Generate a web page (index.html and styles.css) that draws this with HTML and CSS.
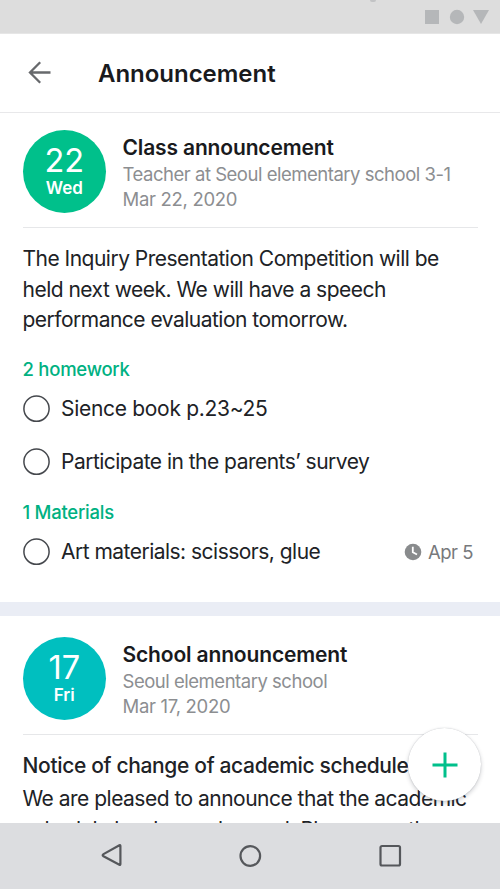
FILE: index.html
```
<!DOCTYPE html>
<html lang="en">
<head>
<meta charset="utf-8">
<title>Announcement</title>
<link rel="stylesheet" href="styles.css">
</head>
<body>
<div class="screen">
  <div class="status">
    <span class="speaker"></span>
    <svg width="66" height="16" viewBox="0 0 66 16"><path d="M1 1h14v14H1z"/><circle cx="33" cy="8" r="7.2"/><path d="M49 1h16l-8 14z"/></svg>
  </div>
  <header class="appbar">
    <svg class="back" width="24" height="24" viewBox="0 0 24 24"><path d="M22.500 11.500H2M12.200 1.300L2 11.500l10.200 10.200"/></svg>
    <h1 class="appbar-title">Announcement</h1>
  </header>
  <main class="feed">
    <article class="card">
      <div class="card-head">
        <div class="date date-green"><span class="day">22</span><span class="weekday">Wed</span></div>
        <div class="info">
          <h2 class="title">Class announcement</h2>
          <p class="sub">Teacher at Seoul elementary school 3-1</p>
          <p class="sub sub-date">Mar 22, 2020</p>
        </div>
      </div>
      <p class="body">The Inquiry Presentation Competition will be<br>held next week. We will have a speech<br>performance evaluation tomorrow.</p>
      <h3 class="group">2 homework</h3>
      <div class="task"><svg class="check" width="27" height="28" viewBox="0 0 27 28"><circle cx="13.500" cy="13.700" r="12.600"/></svg><span class="label label-wide">Sience book p.23~25</span></div>
      <div class="task task-next"><svg class="check" width="27" height="28" viewBox="0 0 27 28"><circle cx="13.500" cy="13.700" r="12.600"/></svg><span class="label">Participate in the parents’ survey</span></div>
      <h3 class="group group-materials">1 Materials</h3>
      <div class="task"><svg class="check" width="27" height="28" viewBox="0 0 27 28"><circle cx="13.500" cy="13.700" r="12.600"/></svg><span class="label">Art materials: scissors, glue</span>
        <span class="due"><svg width="18" height="18" viewBox="0 0 18 18"><circle cx="9" cy="9" r="8.300"/><path d="M8.800 3.800v5.400l4.200 2.300"/></svg>Apr 5</span>
      </div>
    </article>
    <article class="card card-school">
      <div class="card-head">
        <div class="date date-teal"><span class="day">17</span><span class="weekday">Fri</span></div>
        <div class="info">
          <h2 class="title">School announcement</h2>
          <p class="sub">Seoul elementary school</p>
          <p class="sub sub-date">Mar 17, 2020</p>
        </div>
      </div>
      <h3 class="notice">Notice of change of academic schedule</h3>
      <p class="body body-notice">We are pleased to announce that the academic<br>schedule has been changed. Please see the</p>
    </article>
  </main>
  <nav class="nav">
    <svg width="24" height="24" viewBox="0 0 24 24"><path d="M22.400 2v18q0 1.200-1 .7L5.500 12.300q-1.700-1.100 0-2.200L21.400 1.300q1-.5 1 .7z"/></svg>
    <svg width="24" height="24" viewBox="0 0 24 24"><circle cx="12.300" cy="12" r="9.800"/></svg>
    <svg width="24" height="24" viewBox="0 0 24 24"><rect x="2.500" y="2" width="19.500" height="19.500" rx="1.500"/></svg>
  </nav>
  <div class="fab"><svg width="26" height="26" viewBox="0 0 26 26"><path d="M13 .5v25M.5 13h25"/></svg></div>
</div>
</body>
</html>
```
FILE: styles.css
```
* { box-sizing: border-box; }
body, h1, h2, h3, p { margin: 0; }
body { font-family: Inter, "Liberation Sans", sans-serif; color: #202226; background: #fff; }
svg { display: block; flex: none; }

.screen { position: relative; display: flex; flex-direction: column; width: 500px; height: 889px; overflow: hidden; }
.status { flex: none; display: flex; justify-content: flex-end; align-items: center; height: 34px; padding-right: 10px; background: #ddd; border-bottom: 1px solid #e6e6e6; }
.status svg { fill: #b5b7b9; }
.speaker { align-self: flex-start; width: 6px; height: 2px; margin-right: 48px; border-radius: 0 0 3px 3px; background: #c2c3c5; }
.appbar { flex: none; display: flex; align-items: center; gap: 46px; height: 79px; padding-left: 28px; border-bottom: 1px solid #e8e8ea; }
.back { fill: none; stroke: #67696c; stroke-width: 2.3; }
.appbar-title { padding-top: 2px; font-size: 24px; line-height: 28px; font-weight: 600; letter-spacing: -.03px; color: #191a1d; }

.feed { flex: 1; min-height: 0; overflow: hidden; }
.card { height: 489px; padding: 16px 22px 0 22.500px; }
.card-school { height: auto; padding-top: 20px; border-top: 14px solid #eaedf5; }
.card-head { display: flex; gap: 16.500px; height: 99px; border-bottom: 1px solid #e6e7e9; }
.date { flex: none; display: flex; flex-direction: column; align-items: center; width: 83.500px; height: 83.500px; margin-top: .5px; padding-top: 13.500px; border-radius: 50%; color: #fff; }
.date-green { background: #00c08b; }
.date-teal { background: #00bfbf; }
.day { font-size: 32.500px; line-height: 36px; }
.weekday { font-size: 17px; line-height: 19px; font-weight: 600; }
.info { padding-top: 5px; white-space: nowrap; }
.title { font-size: 21px; line-height: 28px; font-weight: 600; letter-spacing: -.15px; color: #191a1d; }
.sub { font-size: 18.500px; line-height: 25px; letter-spacing: -.48px; color: #8c8e91; }
.sub-date { letter-spacing: -.3px; }
.body { padding-top: 16px; font-size: 21px; line-height: 30.700px; letter-spacing: -.51px; white-space: nowrap; }
.group { margin-top: 21px; font-size: 18.500px; line-height: 24px; font-weight: 500; letter-spacing: -.25px; color: #00b182; }
.group-materials { margin-top: 24px; }
.task { display: flex; align-items: center; height: 28px; margin-top: 14px; gap: 11.500px; white-space: nowrap; }
.task-next { margin-top: 25px; }
.check { fill: none; stroke: #45484d; stroke-width: 1.500; }
.label { font-size: 21px; line-height: 28px; letter-spacing: -.52px; }
.label-wide { letter-spacing: -.3px; }
.due { display: flex; align-items: center; gap: 6px; margin-left: auto; padding-right: 5px; font-size: 18.500px; letter-spacing: -.5px; color: #77797c; }
.due circle { fill: #898b8d; }
.due path { fill: none; stroke: #fff; stroke-width: 1.800; }
.notice { padding-top: 17px; font-size: 21px; line-height: 28px; font-weight: 500; letter-spacing: -.34px; white-space: nowrap; }
.body-notice { padding-top: 4px; }

.nav { flex: none; display: flex; justify-content: center; gap: 116px; height: 66px; padding-top: 21px; background: #dcdde0; }
.nav svg { fill: none; stroke: #55575b; stroke-width: 2.200; }
.fab { position: absolute; left: 408px; top: 728px; display: flex; align-items: center; justify-content: center; width: 73px; height: 73px; border-radius: 50%; background: #fff; box-shadow: 0 2px 4px rgba(40, 45, 60, .22), 0 0 1px rgba(40, 45, 60, .3); }
.fab path { fill: none; stroke: #00c08b; stroke-width: 3; }
```
